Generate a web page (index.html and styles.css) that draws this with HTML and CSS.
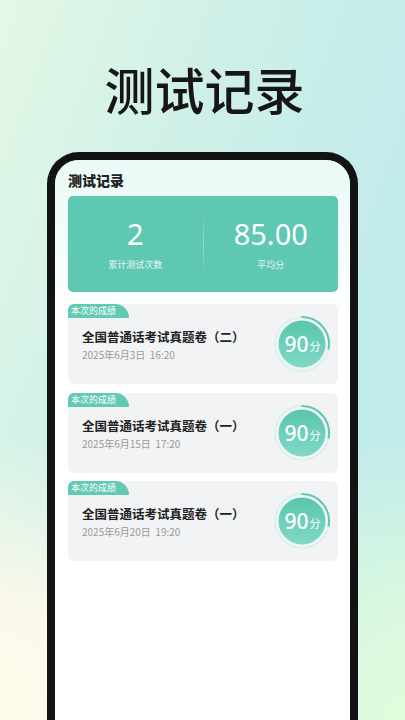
FILE: index.html
```html
<!DOCTYPE html>
<html lang="zh-CN">
<head>
<meta charset="utf-8">
<title>测试记录</title>
<link rel="stylesheet" href="styles.css">
</head>
<body>
<div class="page">
  <h1 class="hero">测试记录</h1>
  <div class="phone">
    <div class="screen">
      <div class="header">测试记录</div>
      <div class="stats">
        <div class="stat">
          <div class="num">2</div>
          <div class="label">累计测试次数</div>
        </div>
        <div class="divider"></div>
        <div class="stat">
          <div class="num">85.00</div>
          <div class="label">平均分</div>
        </div>
      </div>
      <div class="list">
        <div class="card">
          <div class="tag">本次的成绩</div>
          <div class="info">
            <div class="title">全国普通话考试真题卷（二）</div>
            <div class="date">2025年6月3日&nbsp; 16:20</div>
          </div>
          <div class="score">
            <svg class="ring" viewBox="0 0 58 58" width="58" height="58">
              <defs>
                <linearGradient id="g1" x1="0" y1="0" x2="0" y2="1">
                  <stop offset="0" stop-color="#58c6ae"/>
                  <stop offset="1" stop-color="#7fd9c5"/>
                </linearGradient>
              </defs>
              <circle cx="29" cy="29" r="27" fill="none" stroke="#d9f3ec" stroke-width="2"/>
              <path d="M29 2 A27 27 0 0 1 55.6 33.7" fill="none" stroke="#5cc8b0" stroke-width="2" stroke-linecap="round"/>
              <circle cx="29" cy="29" r="23.5" fill="url(#g1)"/>
            </svg>
            <div class="score-text"><span class="big">90</span><span class="unit">分</span></div>
          </div>
        </div>
        <div class="card">
          <div class="tag">本次的成绩</div>
          <div class="info">
            <div class="title">全国普通话考试真题卷（一）</div>
            <div class="date">2025年6月15日&nbsp; 17:20</div>
          </div>
          <div class="score">
            <svg class="ring" viewBox="0 0 58 58" width="58" height="58">
              <circle cx="29" cy="29" r="27" fill="none" stroke="#d9f3ec" stroke-width="2"/>
              <path d="M29 2 A27 27 0 0 1 55.6 33.7" fill="none" stroke="#5cc8b0" stroke-width="2" stroke-linecap="round"/>
              <circle cx="29" cy="29" r="23.5" fill="url(#g1)"/>
            </svg>
            <div class="score-text"><span class="big">90</span><span class="unit">分</span></div>
          </div>
        </div>
        <div class="card">
          <div class="tag">本次的成绩</div>
          <div class="info">
            <div class="title">全国普通话考试真题卷（一）</div>
            <div class="date">2025年6月20日&nbsp; 19:20</div>
          </div>
          <div class="score">
            <svg class="ring" viewBox="0 0 58 58" width="58" height="58">
              <circle cx="29" cy="29" r="27" fill="none" stroke="#d9f3ec" stroke-width="2"/>
              <path d="M29 2 A27 27 0 0 1 55.6 33.7" fill="none" stroke="#5cc8b0" stroke-width="2" stroke-linecap="round"/>
              <circle cx="29" cy="29" r="23.5" fill="url(#g1)"/>
            </svg>
            <div class="score-text"><span class="big">90</span><span class="unit">分</span></div>
          </div>
        </div>
      </div>
    </div>
  </div>
</div>
</body>
</html>
```
FILE: styles.css
```css
* { box-sizing: border-box; }
html, body {
  margin: 0;
  padding: 0;
  width: 405px;
  height: 720px;
  overflow: hidden;
}
body {
  font-family: "Noto Sans CJK SC", "Noto Sans", sans-serif;
  background:
    radial-gradient(ellipse 60% 40% at 0% 100%, #fffaea 0%, rgba(255,250,234,0.9) 40%, rgba(255,250,234,0) 100%),
    radial-gradient(ellipse 50% 40% at 100% 100%, #e0fcdc 0%, rgba(224,252,220,0.8) 40%, rgba(224,252,220,0) 100%),
    linear-gradient(110deg, #e4f8e5 0%, #cff0e8 35%, #c2ebeb 70%, #bee9ec 100%);
}
.page {
  display: flex;
  flex-direction: column;
  height: 720px;
}
.hero {
  margin: 58px 0 0;
  height: 60px;
  line-height: 60px;
  text-align: center;
  font-size: 50px;
  font-weight: 500;
  color: #161616;
  padding-left: 4px;
}
.phone {
  margin: 34px 0 0 47px;
  width: 311px;
  flex: 1;
  min-height: 0;
  border: 8px solid #131313;
  border-bottom: none;
  border-radius: 32px 32px 0 0;
  background: #fff;
  overflow: hidden;
}
.screen {
  height: 100%;
  padding: 11px 12px 0 13px;
  background: linear-gradient(to bottom, #e9faf6 0px, #f6fdfb 100px, #ffffff 160px);
}
.header {
  height: 18px;
  line-height: 18px;
  font-size: 14px;
  font-weight: 900;
  color: #222;
}
.stats {
  margin-top: 7px;
  height: 96px;
  background: #5fc8b3;
  border-radius: 5px;
  display: flex;
  align-items: center;
}
.stat {
  flex: 1;
  display: flex;
  flex-direction: column;
  align-items: center;
  color: #fff;
}
.num {
  font-family: "Noto Sans", "Noto Sans CJK SC", sans-serif;
  font-size: 29px;
  line-height: 36px;
  font-weight: 400;
  margin-top: -2px;
}
.label {
  font-size: 9px;
  line-height: 12px;
  margin-top: 7px;
  color: rgba(255,255,255,0.85);
}
.divider {
  width: 1px;
  height: 58px;
  background: linear-gradient(to bottom, rgba(255,255,255,0), rgba(255,255,255,0.35), rgba(255,255,255,0));
}
.list {
  margin-top: 12px;
  display: flex;
  flex-direction: column;
  gap: 8.5px;
}
.card {
  position: relative;
  height: 80px;
  background: #f2f3f5;
  border-radius: 6px;
  display: flex;
  align-items: center;
  padding: 0 7px 0 14px;
}
.tag {
  position: absolute;
  left: 0;
  top: 0;
  width: 61px;
  height: 14px;
  line-height: 14px;
  padding-left: 3px;
  font-size: 9px;
  color: #fff;
  background: #62c9b3;
  border-radius: 6px 14px 0 0 / 6px 14px 0 0;
}
.info {
  flex: 1;
  padding-top: 2px;
}
.title {
  font-size: 12.5px;
  line-height: 16px;
  font-weight: 700;
  color: #222;
}
.date {
  margin-top: 3px;
  font-size: 10px;
  line-height: 13px;
  color: #999;
}
.score {
  position: relative;
  width: 58px;
  height: 58px;
  flex: none;
}
.ring { display: block; }
.score-text {
  position: absolute;
  inset: 0;
  display: flex;
  align-items: center;
  justify-content: center;
  color: #fff;
  padding-left: 1px;
}
.big {
  font-family: "Noto Sans", sans-serif;
  font-size: 21px;
  font-weight: 500;
  line-height: 24px;
}
.unit {
  font-size: 11px;
  line-height: 14px;
  margin-top: 4px;
  margin-left: 1px;
}
```
